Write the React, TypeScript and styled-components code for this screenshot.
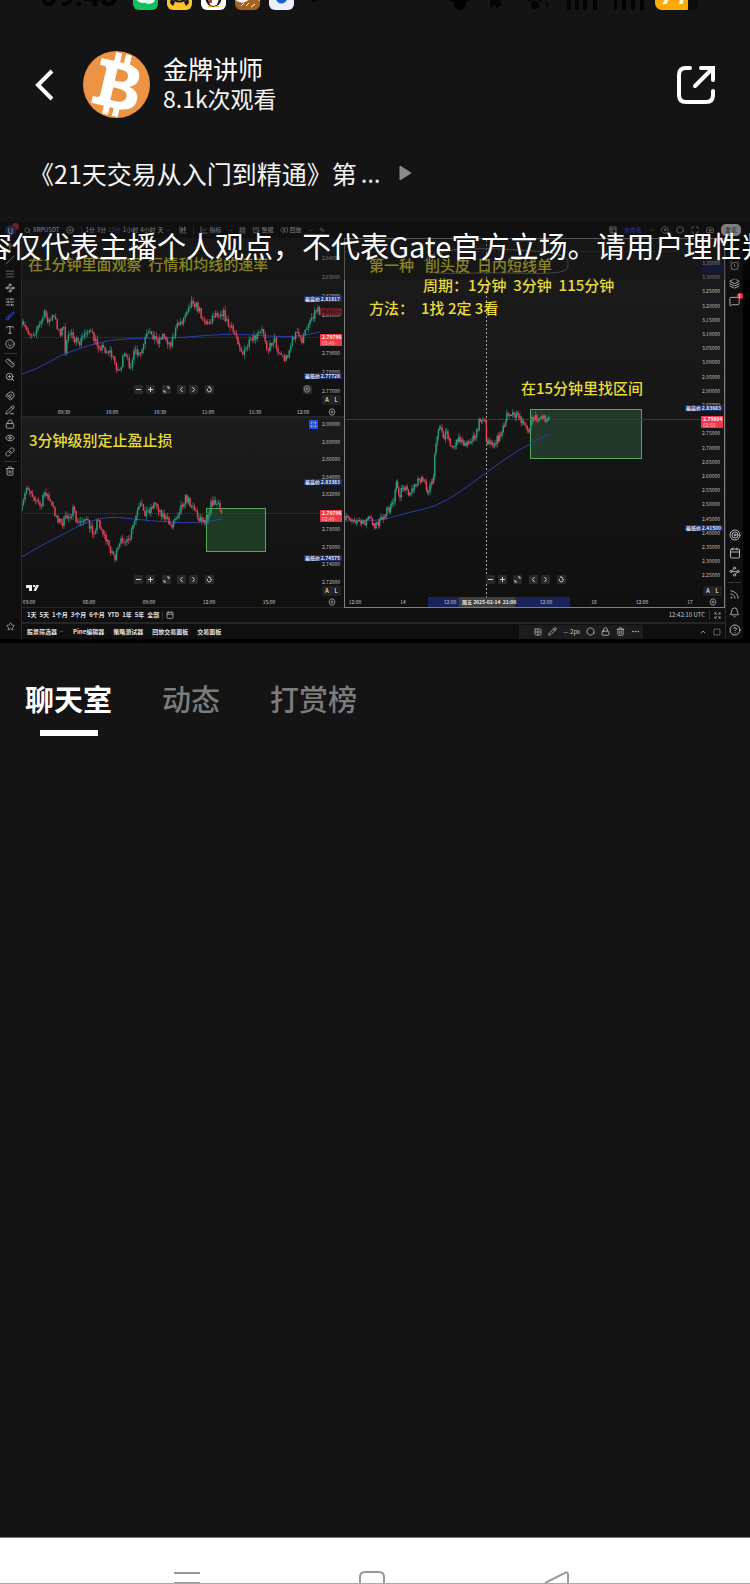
import React from "react";
import styled, { createGlobalStyle } from "styled-components";
import {
  AlarmClock, Bell, Brush, Calendar, Camera, ChevronDown, ChevronUp, CircleHelp, CirclePlus, CircleGauge,
  CandlestickChart, ChartLine, Eye, Expand, Grid2x2, Hexagon, LayoutGrid, Layers, Link, Lock, Magnet,
  Maximize, MessageSquare, PanelsTopLeft, Pencil, PencilLine, Rewind, Rss, Ruler, Search, Slash, Smile,
  Star, Target, TextAlignJustify, Trash2, Type, Undo2, Waypoints, ZoomIn, Ellipsis, SlidersHorizontal,
  SquareDashed, Plus,
} from "lucide-react";

const sans = `"Noto Sans CJK SC", "Noto Sans", sans-serif`;

const GlobalStyle = createGlobalStyle`
  * { box-sizing: border-box; }
  body { margin: 0; background: #141414; font-family: ${sans}; }
  button { font: inherit; color: inherit; background: none; border: 0; padding: 0; cursor: pointer; }
`;

const Page = styled.div`
  display: flex;
  flex-direction: column;
  min-height: 100vh;
  background: #141414;
  color: #fff;
  overflow: hidden;
`;

/* ---------- status bar ---------- */

const StatusBar = styled.div`
  display: flex;
  align-items: flex-end;
  justify-content: space-between;
  height: 10px;
  overflow: hidden;
  padding: 0 52px 0 40px;
  color: #020202;
`;
const StatusGroup = styled.div<{ $gap: number }>`
  display: flex;
  align-items: flex-end;
  gap: ${(p) => p.$gap}px;
  height: 26px;
`;
const Clock = styled.span`
  width: 84px;
  font: 700 30px/36px Roboto, sans-serif;
  height: 32px;
`;
const Battery = styled.span`
  display: flex;
  align-items: flex-end;
  justify-content: flex-end;
  width: 33px;
  height: 26px;
  border-radius: 0 0 1px 7px;
  background: #fdac07;
  color: #fff;
  font: italic 700 24px/28px Roboto, sans-serif;
`;
const BatteryShell = styled.span`
  height: 26px;
  padding-right: 10px;
  border-radius: 7px;
  background: #0b0b0b;
`;

/* ---------- header ---------- */

const Header = styled.header`
  display: flex;
  align-items: center;
  padding: 41px 32px 0 32px;
`;
const IconButton = styled.button`
  display: flex;
  align-items: center;
  justify-content: center;
`;
const Host = styled.div`
  display: flex;
  align-items: center;
  flex: 1;
  gap: 13px;
  margin-left: 25px;
`;
const HostText = styled.div`
  display: flex;
  flex-direction: column;
  padding-bottom: 4px;
`;
const HostName = styled.h1`
  margin: 0;
  font-size: 25px;
  line-height: 30px;
  font-weight: 400;
`;
const Views = styled.span`
  font-size: 23px;
  line-height: 30px;
  color: #f2f2f2;
`;
const Episode = styled.button`
  display: flex;
  align-items: center;
  align-self: flex-start;
  margin: 37px 0 31px;
  padding-left: 29px;
  font-size: 25px;
  line-height: 36px;
  color: #f4f4f4;
`;
const EpisodeDots = styled.span`
  margin: 0 18px 0 4px;
  font-family: "Noto Sans", sans-serif;
`;

/* ---------- video ---------- */

const Video = styled.section`
  position: relative;
  display: flex;
  flex-direction: column;
  overflow: hidden;
  background: #0f0f0f;
  border-bottom: 4px solid #000;
  font-size: 6px;
  line-height: 8px;
  color: #c8c8c8;
`;
const Toolbar = styled.div`
  display: flex;
  align-items: center;
  height: 16px;
  padding: 0 9px 0 5px;
`;
const Tools = styled.div<{ $gap: number; $left?: number }>`
  display: flex;
  align-items: center;
  gap: ${(p) => p.$gap}px;
  margin-left: ${(p) => p.$left ?? 0}px;
`;
const Spacer = styled.div`
  flex: 1;
`;
const ToolButton = styled.button<{ $active?: boolean; $strong?: boolean }>`
  display: flex;
  align-items: center;
  gap: 2px;
  white-space: nowrap;
  color: ${(p) => (p.$active ? "#3350e0" : p.$strong ? "#e0e0e0" : "inherit")};
  font-weight: ${(p) => (p.$strong ? 700 : 400)};
`;
const UserBadge = styled.span`
  width: 11px;
  height: 11px;
  border-radius: 50%;
  background: #283070;
  color: #e8e8f4;
  text-align: center;
  font-size: 8px;
  line-height: 11px;
  box-shadow: 5px -4px 0 -2px #b02a3a;
`;
const Publish = styled.button`
  width: 20px;
  height: 12px;
  border-radius: 5px;
  background: #c4c4c4;
  color: #333;
`;
const Divider = styled.span`
  width: 1px;
  height: 9px;
  background: #333;
`;
const Workspace = styled.div`
  display: flex;
`;
const Rail = styled.nav<{ $side: "left" | "right" }>`
  display: flex;
  flex-direction: column;
  align-items: center;
  width: ${(p) => (p.$side === "left" ? 22 : 25)}px;
  padding: ${(p) => (p.$side === "left" ? "1px 1px 6px 0" : "0 6px 0 0")};
  border-right: ${(p) => (p.$side === "left" ? "1px solid #2b2b2b" : "0")};
  background: ${(p) => (p.$side === "left" ? "#0f0f0f" : "linear-gradient(90deg, #2b2b2b 1px, #0f0f0f 1px 18px, #000 18px)")};
`;
const RailButton = styled.button<{ $tall?: boolean; $active?: boolean }>`
  display: flex;
  align-items: center;
  justify-content: center;
  position: relative;
  width: 16px;
  height: ${(p) => (p.$tall ? 18 : 14)}px;
  color: ${(p) => (p.$active ? "#3a4cf0" : "#b4b4b4")};
`;
const RailRule = styled.span`
  width: 13px;
  height: 1px;
  margin: 2px 0;
  background: #353535;
`;
const RailGap = styled.span<{ $size: number }>`
  height: ${(p) => p.$size}px;
`;
const RedDot = styled.span`
  position: absolute;
  top: 1px;
  right: 0;
  width: 6px;
  height: 6px;
  border-radius: 50%;
  background: #ee3346;
  color: #fff;
  font-size: 5px;
  line-height: 6px;
`;
const Center = styled.div`
  display: flex;
  flex-direction: column;
  flex: 1;
  min-width: 0;
`;
const Charts = styled.div`
  display: grid;
  grid-template-columns: 322fr 381fr;
`;
const ChartColumn = styled.div`
  display: flex;
  flex-direction: column;
`;
const Chart = styled.svg`
  display: block;
  width: 100%;
  height: auto;
  font-family: ${sans};
`;
const Bar = styled.div`
  display: flex;
  align-items: center;
  height: 16px;
  padding: 0 4px 0 5px;
  border-bottom: 2px solid #252525;
`;
const FooterBar = styled(Bar)`
  border-bottom: 0;
  height: 15px;
`;
const DrawTools = styled.div`
  display: flex;
  align-items: center;
  justify-content: flex-end;
  gap: 6px;
  width: 124px;
  height: 14px;
  margin-right: 56px;
  padding-right: 3px;
  background: #1c1c1c;
`;
const Disclaimer = styled.p`
  position: absolute;
  inset: 0 0 auto 0;
  height: 58px;
  margin: 0;
  overflow: hidden;
  white-space: nowrap;
  text-indent: -17px;
  background: rgba(18, 18, 18, 0.4);
  color: #fff;
  font-size: 29px;
  line-height: 46px;
`;

/* ---------- tabs and chat ---------- */

const Tabs = styled.div`
  display: flex;
  gap: 50px;
  padding: 34px 25px 0;
`;
const Tab = styled.button<{ $active?: boolean }>`
  display: flex;
  flex-direction: column;
  align-items: center;
  gap: 11px;
  font-size: 29px;
  line-height: 42px;
  font-weight: ${(p) => (p.$active ? 700 : 500)};
  color: ${(p) => (p.$active ? "#fff" : "#7c7c7c")};
  &::after {
    content: "";
    width: 58px;
    height: 6px;
    background: ${(p) => (p.$active ? "#fff" : "transparent")};
  }
`;
const ChatRoom = styled.main`
  flex: 1;
`;
const SystemNav = styled.nav`
  display: flex;
  justify-content: space-between;
  align-items: flex-end;
  height: 47px;
  padding: 0 24% 0 23%;
  border-top: 1px solid #777;
  border-bottom: 1px solid #aaa;
  background: #fff;
  overflow: hidden;
`;

/* ---------- chart data ---------- */

type Pt = [number, number];

const fastPath: Pt[] = [[22,326],[32,334],[40,325],[44,314],[50,322],[53,316],[60,332],[64,328],[65,350],[71,330],[78,346],[88,328],[96,343],[103,348],[110,352],[119,372],[124,356],[130,365],[135,352],[140,357],[146,337],[152,333],[157,341],[163,335],[170,344],[178,325],[184,318],[188,305],[193,300],[200,312],[207,325],[215,313],[223,312],[228,325],[237,337],[243,355],[248,345],[254,340],[263,330],[268,350],[274,338],[278,350],[285,360],[291,345],[295,333],[303,341],[308,322],[314,313],[318,307],[320,313]];
const fastAverage: Pt[] = [[22,374],[38,369],[60,355],[90,345],[110,340],[140,338],[180,338],[230,333],[280,337],[300,336],[320,332]];
const midPath: Pt[] = [[22,510],[27,485],[33,495],[41,508],[45,490],[52,507],[61,524],[73,511],[78,525],[84,517],[93,533],[98,520],[106,540],[115,558],[123,537],[128,545],[137,513],[141,506],[146,513],[155,503],[163,515],[171,526],[178,512],[185,498],[193,505],[197,516],[205,521],[212,502],[217,504],[222,514]];
const midAverage: Pt[] = [[22,557],[40,546],[60,536],[80,525],[100,518],[118,517],[150,521],[185,523],[205,522],[223,519]];
const slowPath: Pt[] = [[346,520],[352,518],[358,521],[363,524],[369,518],[375,525],[380,522],[385,513],[389,511],[394,500],[396,478],[399,500],[403,484],[409,493],[414,488],[418,479],[423,482],[429,491],[434,478],[435,450],[438,433],[441,430],[443,437],[447,432],[452,449],[458,437],[463,445],[470,440],[477,432],[480,418],[485,420],[486,440],[493,443],[500,437],[505,425],[507,411],[512,415],[518,418],[528,430],[533,417],[538,418],[543,417],[549,420]];
const slowAverage: Pt[] = [[346,521],[375,521],[390,518],[410,512],[435,507],[460,492],[487,472],[515,452],[548,434]];

/* Walks along the price path and emits one candle per step, with repeatable jitter. */
function candles(path: Pt[], step: number, jitter: number) {
  let seed = 7;
  const rand = () => {
    seed = (seed * 16807) % 2147483647;
    return seed / 2147483647 - 0.5;
  };
  const out: { x: number; open: number; close: number; high: number; low: number }[] = [];
  let prev = path[0][1];
  let i = 0;
  for (let x = path[0][0]; x <= path[path.length - 1][0]; x += step) {
    while (i < path.length - 2 && path[i + 1][0] < x) i++;
    const [x0, y0] = path[i];
    const [x1, y1] = path[i + 1];
    const close = y0 + ((y1 - y0) * (x - x0)) / (x1 - x0) + rand() * jitter;
    out.push({
      x,
      open: prev,
      close,
      high: Math.min(prev, close) - Math.abs(rand()) * jitter,
      low: Math.max(prev, close) + Math.abs(rand()) * jitter,
    });
    prev = close;
  }
  return out;
}

const Candles = ({ path, step, jitter }: { path: Pt[]; step: number; jitter: number }) => (
  <g>
    {candles(path, step, jitter).map((c, i) => {
      const fill = c.close <= c.open ? "#2a9d80" : "#e0455a";
      return (
        <g key={i} fill={fill}>
          <rect x={c.x - 0.3} y={c.high} width={0.6} height={c.low - c.high} />
          <rect x={c.x - 0.7} y={Math.min(c.open, c.close)} width={1.4} height={Math.max(1, Math.abs(c.close - c.open))} />
        </g>
      );
    })}
  </g>
);

const Average = ({ points }: { points: Pt[] }) => {
  let d = `M${points[0].join(" ")}`;
  for (let i = 1; i < points.length - 1; i++) {
    const [x, y] = points[i];
    const [nx, ny] = points[i + 1];
    d += ` Q${x} ${y} ${(x + nx) / 2} ${(y + ny) / 2}`;
  }
  d += ` L${points[points.length - 1].join(" ")}`;
  return <path d={d} fill="none" stroke="#2b3fae" strokeWidth={1} />;
};

const Prices = ({ x, first, step, start, gap, count, skip = [] }: { x: number; first: number; step: number; start: number; gap: number; count: number; skip?: number[] }) => (
  <g fontSize={5} fill="#c0c0c0" textAnchor="end">
    {Array.from({ length: count }, (_, i) => i)
      .filter((i) => !skip.includes(i))
      .map((i) => (
        <text key={i} x={x} y={start + gap * i + 2}>{(first - step * i).toFixed(5)}</text>
      ))}
  </g>
);

const Times = ({ y, items }: { y: number; items: [number, string][] }) => (
  <g fontSize={5} fill="#d0d0d0" textAnchor="middle">
    {items.map(([x, t]) => <text key={x} x={x} y={y + 2}>{t}</text>)}
  </g>
);

const PriceTag = ({ x, y, label, value }: { x: number; y: number; label: string; value: string }) => (
  <g fontSize={5} fontWeight={700} fill="#e6e9f5">
    <rect x={x} y={y - 3} width={38} height={6} fill="#1a2f6e" />
    <text x={x + 1} y={y + 2}>{label}</text>
    <text x={x + 36} y={y + 2} textAnchor="end">{value}</text>
  </g>
);

const LiveTag = ({ x, y, value, time }: { x: number; y: number; value: string; time: string }) => (
  <g fontSize={5} fill="#fff">
    <rect x={x} y={y} width={22} height={12} fill="#f0384a" />
    <text x={x + 2} y={y + 5} fontWeight={700}>{value}</text>
    <text x={x + 2} y={y + 11} fill="#ffc4ca">{time}</text>
  </g>
);

const ZoomControls = ({ xs, y }: { xs: number[]; y: number }) => {
  const marks = ["M-2 .5H3", "M-2 .5H3M.5 -2V3", "M1 -2H3V0M-2 1V3H0", "M1.500 -2L-.5 .5L1.500 3", "M-.5 -2L1.500 .5L-.5 3", "M-1 -2H1V-1A2 2 0 1 1 -1.500 0"];
  return (
    <g>
      {xs.map((x, i) => (
        <g key={x} transform={`translate(${x} ${y})`}>
          <rect x={-4} y={-4} width={9} height={9} rx={1} fill="#292929" />
          <path d={marks[i]} fill="none" stroke="#d0d0d0" />
        </g>
      ))}
    </g>
  );
};

const ScaleModes = ({ x, y }: { x: number; y: number }) => (
  <g fontSize={6} fontWeight={700} fill="#c8c8c8" textAnchor="middle">
    <rect x={x - 4} y={y - 4} width={8} height={8} fill="#1c1c1c" stroke="#2e2e2e" />
    <rect x={x + 5} y={y - 4} width={8} height={8} fill="#1c1c1c" stroke="#2e2e2e" />
    <text x={x} y={y + 2}>A</text>
    <text x={x + 9} y={y + 2}>L</text>
  </g>
);

const Gear = ({ x, y }: { x: number; y: number }) => (
  <g transform={`translate(${x} ${y})`} fill="none" stroke="#aaa" strokeWidth={0.8}>
    <path d="M-1.500 -3H1.500L3 0L1.500 3H-1.500L-3 0Z" />
    <circle r={1} />
  </g>
);

const Shade = ({ id }: { id: string }) => (
  <defs>
    <linearGradient id={id} x1="0" y1="0" x2="0" y2="1">
      <stop offset="0" stopColor="#1c1c1c" />
      <stop offset="1" stopColor="#101010" />
    </linearGradient>
  </defs>
);

const yellow = "#e8dc3c";
const shadedYellow = "#d8cf30";

const FastChart = () => (
  <Chart viewBox="22 238 322 180" role="img" aria-label="1分钟图">
    <Shade id="fast" />
    <rect x={22} y={238} width={322} height={178} fill="url(#fast)" />
    <rect x={22} y={416} width={322} height={2} fill="#262626" />
    <path d="M24 337.500H322" stroke="#7c2430" strokeWidth={1} strokeDasharray="1 1" />
    <Average points={fastAverage} />
    <Candles path={fastPath} step={1.6} jitter={9} />
    <Prices x={340} first={2.85} step={0.01} start={239} gap={19} count={9} skip={[0, 5]} />
    <PriceTag x={304} y={299} label="最高价" value="2.81817" />
    <rect x={321} y={309} width={20} height={6} fill="#1c1014" stroke="#a82838" />
    <text x={340} y={314} fontSize={5} fill="#d03848" textAnchor="end">2.81092</text>
    <LiveTag x={320} y={334} value="2.79796" time="05:49" />
    <PriceTag x={304} y={376} label="最低价" value="2.77728" />
    <ZoomControls xs={[138, 150, 166, 181, 193, 209]} y={389} />
    <rect x={303} y={385} width={9} height={9} rx={1} fill="#292929" />
    <Gear x={307} y={389} />
    <ScaleModes x={327} y={400} />
    <Times y={412} items={[[64, "09:30"], [112, "10:00"], [160, "10:30"], [208, "11:00"], [255, "11:30"], [303, "12:00"]]} />
    <Gear x={332} y={412} />
    <text x={28} y={270} fontSize={15} fill={shadedYellow} fontWeight={500} xmlSpace="preserve">在1分钟里面观察  行情和均线的速率</text>
  </Chart>
);

const MidChart = () => (
  <Chart viewBox="22 418 322 190" role="img" aria-label="3分钟图">
    <Shade id="mid" />
    <rect x={22} y={418} width={322} height={189} fill="url(#mid)" />
    <path d="M22 607.500H344" stroke="#262626" />
    <rect x={206.5} y={508.5} width={59} height={43} fill="#1f3a24" stroke="#55a85c" />
    <path d="M24 513.500H322" stroke="#7c2430" strokeDasharray="1 1" />
    <Average points={midAverage} />
    <Candles path={midPath} step={1.5} jitter={9} />
    <rect x={309} y={420} width={9} height={9} rx={1} fill="#2456e8" />
    <path d="M311.500 423.500V422.500H312.500M314.500 422.500H315.500V423.500M315.500 425.500V426.500H314.500M312.500 426.500H311.500V425.500" fill="none" stroke="#d4deff" />
    <Prices x={340} first={2.9} step={0.02} start={424} gap={17.5} count={10} skip={[5]} />
    <PriceTag x={304} y={482} label="最高价" value="2.83383" />
    <LiveTag x={320} y={510} value="2.79796" time="02:49" />
    <PriceTag x={304} y={558} label="最低价" value="2.74575" />
    <ZoomControls xs={[138, 150, 166, 181, 193, 209]} y={579} />
    <ScaleModes x={327} y={591} />
    <path d="M26 585H32V591H29V588H26ZM33 585H35V587H33ZM36 585H39L36 591H33.500Z" fill="#ececec" />
    <Times y={602} items={[[29, "03:00"], [89, "06:00"], [149, "09:00"], [209, "12:00"], [269, "15:00"]]} />
    <Gear x={332} y={602} />
    <text x={29} y={446} fontSize={15} fill={yellow} fontWeight={500}>3分钟级别定止盈止损</text>
  </Chart>
);

const SlowChart = () => (
  <Chart viewBox="344 238 381 370" role="img" aria-label="15分钟图">
    <Shade id="slow" />
    <rect x={344} y={238} width={381} height={370} fill="url(#slow)" />
    <rect x={344.5} y={238.5} width={380} height={369} fill="none" stroke="#808080" strokeWidth={1} />
    <path d="M346 251.500H702" stroke="#3a3a3a" strokeDasharray="2 2" />
    <rect x={530.5} y={409.5} width={111} height={49} fill="#22382a" stroke="#55a85c" />
    <path d="M346 419.500H702" stroke="#6c2430" />
    <path d="M486.500 240V597" stroke="#a8a8a8" strokeDasharray="2 2" />
    <Average points={slowAverage} />
    <Candles path={slowPath} step={1.2} jitter={8} />
    <rect x={702} y={261} width={21} height={12} fill="#142046" />
    <Prices x={720} first={3.35} step={0.05} start={263} gap={14.2} count={23} skip={[11]} />
    <PriceTag x={685} y={408} label="最高价" value="2.83683" />
    <LiveTag x={701} y={416} value="2.79804" time="02:50" />
    <PriceTag x={685} y={528} label="最低价" value="2.41500" />
    <ZoomControls xs={[490, 502, 517, 533, 545, 561]} y={579} />
    <ScaleModes x={708} y={591} />
    <rect x={428} y={597} width={142} height={10} fill="#18245a" />
    <Times y={602} items={[[355, "12:00"], [403, "14"], [450, "12:00"], [546, "12:00"], [594, "16"], [642, "12:00"], [690, "17"]]} />
    <rect x={459} y={597} width={56} height={10} fill="#404040" />
    <text x={462} y={604} fontSize={5} fontWeight={700} fill="#f0f0f0" xmlSpace="preserve">周五 2025-02-14  21:00</text>
    <Gear x={713} y={602} />
    <path d="M424 262C432 248 470 247 520 250S568 258 568 266S548 274 510 273S430 276 426 270" fill="none" stroke="#6c6c6c" />
    <g fontSize={15} fill={shadedYellow} fontWeight={500}>
      <text x={369} y={271}>第一种</text>
      <text x={425} y={271}>削头皮</text>
      <text x={477} y={271}>日内短线单</text>
    </g>
    <g fontSize={15} fill={yellow} fontWeight={500}>
      <text x={423} y={291} xmlSpace="preserve">周期：1分钟  3分钟  115分钟</text>
      <text x={369} y={314}>方法：</text>
      <text x={421} y={314}>1找 2定 3看</text>
      <text x={521} y={394}>在15分钟里找区间</text>
    </g>
  </Chart>
);

const BitcoinAvatar = () => (
  <svg width="67" height="67" viewBox="0 0 67 67" role="img" aria-label="金牌讲师">
    <circle cx="33.500" cy="33.500" r="33.500" fill="#ec9344" />
    <g transform="rotate(13 33.5 33.5)" fill="#fff">
      <path d="M26 2H32V14H26ZM36 2H42V14H36ZM26 53H32V65H26ZM36 53H42V65H36Z" />
      <path fillRule="evenodd" d="M13 11H37C48 11 54 15 54 22C54 28 51 31 46 33C53 34 57 38 57 44C57 52 51 57 39 57H13V50H17C19 50 20 49 20 47V21C20 19 19 18 17 18H13ZM31 18V30H35C40 30 43 28 43 24S40 18 35 18ZM31 37V50H37C42 50 46 48 46 43.500S42 37 37 37Z" />
    </g>
  </svg>
);

const leftTop = [Plus, Slash, TextAlignJustify, Waypoints, SlidersHorizontal, Brush, Type, Smile];
const leftLow = [Magnet, PencilLine, Lock, Eye, Link];
const intervals = ["1分", "3分", "15分", "1小时", "4小时", "天"];
const ranges = ["1天", "5天", "1个月", "3个月", "6个月", "YTD", "1年", "5年", "全部"];

export default function App() {
  return (
    <Page>
      <GlobalStyle />
      <StatusBar>
        <StatusGroup $gap={9}>
          <Clock>09:48</Clock>
          <svg width="25" height="26" viewBox="0 0 25 26"><rect width="25" height="26" rx="6" fill="#0ec05f" /><ellipse cx="10" cy="13" rx="7" ry="6" fill="#fff" /><ellipse cx="16" cy="15" rx="6" ry="5" fill="#e8fff2" /></svg>
          <svg width="25" height="26" viewBox="0 0 25 26"><rect width="25" height="26" rx="6" fill="#f8c52c" /><path d="M4 14L8 18L6 22L3 19ZM21 14L17 18L19 22L22 19ZM7 14Q12.500 19 18 14V17Q12.500 20 7 17Z" fill="#151515" /></svg>
          <svg width="25" height="26" viewBox="0 0 25 26"><rect width="25" height="26" rx="6" fill="#fff" /><ellipse cx="12.500" cy="14" rx="8" ry="9" fill="#111" /><ellipse cx="12.500" cy="16" rx="5" ry="6" fill="#fff" /><path d="M8 13L11 14V19H8Z" fill="#e22b22" /><path d="M6 23Q9 20 12 23ZM13 23Q16 20 19 23Z" fill="#f5a817" /></svg>
          <svg width="25" height="26" viewBox="0 0 25 26"><rect width="25" height="26" rx="6" fill="#a5621f" /><path d="M0 16Q7 21 12 17T25 17V12H0Z" fill="#eee" /><path d="M6 22L9 19M11 22L14 19M16 23L20 20" stroke="#fff" /></svg>
          <svg width="25" height="26" viewBox="0 0 25 26"><rect width="25" height="26" rx="6" fill="#e9effb" /><circle cx="12.500" cy="14" r="5.500" fill="#1663c9" /></svg>
          <svg width="25" height="26" viewBox="0 0 25 26"><circle cx="11" cy="16" r="2" fill="#020202" /></svg>
        </StatusGroup>
        <StatusGroup $gap={5}>
          <svg width="240" height="26" viewBox="0 0 240 26" fill="#030303" aria-hidden="true">
            <path d="M42 12H58L60 17H56Q56 26 50 26T43 17H39ZM81 10L92 20L86 25V12L92 16L80 24" />
            <circle cx="125" cy="21" r="4" /><path d="M117 16Q125 9 133 16L131 18Q125 13 119 18ZM135 16L139 20L137 24Z" />
            <path d="M157 8H161V26H157ZM165 8H169V26H165ZM173 8H177V26H173ZM183 8H187V26H183ZM204 8H207V26H204ZM212 8H216V26H212ZM221 8H225V26H221ZM230 8H234V26H230Z" />
          </svg>
          <BatteryShell><Battery>71</Battery></BatteryShell>
        </StatusGroup>
      </StatusBar>

      <Header>
        <IconButton aria-label="返回">
          <svg width="26" height="34" viewBox="0 0 26 34"><path d="M20 3L6 17L20 31" fill="none" stroke="#fff" strokeWidth="4" /></svg>
        </IconButton>
        <Host>
          <BitcoinAvatar />
          <HostText>
            <HostName>金牌讲师</HostName>
            <Views>8.1k次观看</Views>
          </HostText>
        </Host>
        <IconButton aria-label="分享">
          <svg width="44" height="44" viewBox="0 0 44 44" fill="none" stroke="#fff" strokeWidth="4" strokeLinecap="round">
            <path d="M16 5H12Q5 5 5 12V32Q5 39 12 39H32Q39 39 39 32V28" /><path d="M27 5H39V17M38 6L21 23" strokeLinejoin="miter" />
          </svg>
        </IconButton>
      </Header>

      <Episode>
        《21天交易从入门到精通》第<EpisodeDots>…</EpisodeDots>
        <svg width="14" height="16" viewBox="0 0 14 16"><path d="M1 1L12 8L1 15Z" fill="#8a8a8a" stroke="#8a8a8a" strokeLinejoin="round" /></svg>
      </Episode>

      <Video aria-label="直播回放">
        <Toolbar>
          <UserBadge>U</UserBadge>
          <Tools $gap={7} $left={8}>
            <ToolButton><Search size={7} />XRPUSDT</ToolButton>
            <CirclePlus size={8} />
            <Divider />
          </Tools>
          <Tools $gap={2} $left={3}>
            {intervals.map((t) => <ToolButton key={t} $active={t === "15分"}>{t}</ToolButton>)}
            <ChevronDown size={5} />
          </Tools>
          <Tools $gap={6} $left={8}>
            <CandlestickChart size={8} />
            <Divider />
            <ToolButton><ChartLine size={8} />指标</ToolButton>
            <ChevronDown size={5} />
            <LayoutGrid size={7} />
            <ToolButton><AlarmClock size={8} />警报</ToolButton>
            <ToolButton><Rewind size={8} />回放</ToolButton>
            <ChevronDown size={5} />
            <Undo2 size={6} />
          </Tools>
          <Spacer />
          <Tools $gap={7}>
            <PanelsTopLeft size={8} />
            <ToolButton $active>未命名</ToolButton>
            <ChevronDown size={5} />
            <CircleGauge size={8} />
            <Hexagon size={8} />
            <Maximize size={8} />
            <Camera size={8} />
            <Publish>发表</Publish>
          </Tools>
        </Toolbar>

        <Workspace>
          <Rail $side="left" aria-label="绘图工具">
            {leftTop.map((Icon, i) => <RailButton key={i} $active={Icon === Brush}><Icon size={10} /></RailButton>)}
            <RailRule />
            <RailButton><Ruler size={10} /></RailButton>
            <RailButton><ZoomIn size={10} /></RailButton>
            <RailGap $size={5} />
            {leftLow.map((Icon, i) => <RailButton key={i}><Icon size={10} /></RailButton>)}
            <RailRule />
            <RailButton><Trash2 size={10} /></RailButton>
            <Spacer />
            <RailButton><Star size={9} /></RailButton>
          </Rail>

          <Center>
            <Charts>
              <ChartColumn>
                <FastChart />
                <MidChart />
              </ChartColumn>
              <SlowChart />
            </Charts>
            <Bar>
              <Tools $gap={3}>
                {ranges.map((t) => <ToolButton key={t} $strong>{t}</ToolButton>)}
                <Divider />
                <Calendar size={8} />
              </Tools>
              <Spacer />
              <Tools $gap={4}>
                <span>12:42:10 UTC</span>
                <Divider />
                <Expand size={7} />
              </Tools>
            </Bar>
            <FooterBar>
              <Tools $gap={9}>
                <ToolButton $strong>股票筛选器 <ChevronDown size={5} /></ToolButton>
                <ToolButton $strong>Pine编辑器</ToolButton>
                <ToolButton $strong>策略测试器</ToolButton>
                <ToolButton $strong>回放交易面板</ToolButton>
                <ToolButton $strong>交易面板</ToolButton>
              </Tools>
              <Spacer />
              <DrawTools>
                <Grid2x2 size={8} />
                <Pencil size={9} />
                <span>— 2px</span>
                <Hexagon size={9} />
                <Lock size={9} />
                <Trash2 size={9} />
                <Ellipsis size={9} />
              </DrawTools>
              <Tools $gap={6}>
                <ChevronUp size={8} />
                <SquareDashed size={8} />
              </Tools>
            </FooterBar>
          </Center>

          <Rail $side="right" aria-label="侧边面板">
            <RailGap $size={18} />
            <RailButton $tall><AlarmClock size={11} /></RailButton>
            <RailButton $tall><Layers size={11} /></RailButton>
            <RailButton $tall><MessageSquare size={11} /><RedDot>1</RedDot></RailButton>
            <Spacer />
            <RailButton $tall><Target size={12} /></RailButton>
            <RailButton $tall><Calendar size={12} /></RailButton>
            <RailButton $tall><Waypoints size={11} /></RailButton>
            <RailRule />
            <RailButton $tall><Rss size={11} /></RailButton>
            <RailButton $tall><Bell size={11} /></RailButton>
            <RailButton $tall><CircleHelp size={12} /></RailButton>
          </Rail>
        </Workspace>
        <Disclaimer>容仅代表主播个人观点，不代表Gate官方立场。请用户理性判</Disclaimer>
      </Video>

      <Tabs role="tablist">
        <Tab role="tab" aria-selected $active>聊天室</Tab>
        <Tab role="tab">动态</Tab>
        <Tab role="tab">打赏榜</Tab>
      </Tabs>
      <ChatRoom />

      <SystemNav aria-label="系统导航">
        <IconButton aria-label="最近任务">
          <svg width="28" height="12" viewBox="0 0 28 12"><path d="M1 2H27M1 12H27" stroke="#999" strokeWidth="2" /></svg>
        </IconButton>
        <IconButton aria-label="主屏幕">
          <svg width="26" height="12" viewBox="0 0 26 12"><path d="M1 12V6Q1 1 6 1H20Q25 1 25 6V12" fill="none" stroke="#999" strokeWidth="2" /></svg>
        </IconButton>
        <IconButton aria-label="返回上一页">
          <svg width="26" height="12" viewBox="0 0 26 12"><path d="M1 12L21 2Q24 0 24 4V12" fill="none" stroke="#999" strokeWidth="2" /></svg>
        </IconButton>
      </SystemNav>
    </Page>
  );
}
